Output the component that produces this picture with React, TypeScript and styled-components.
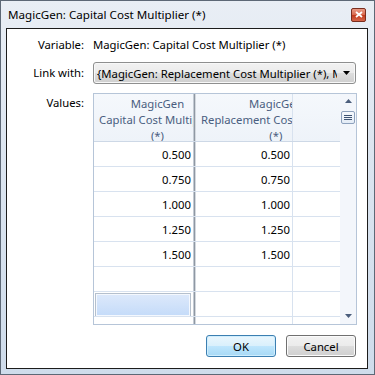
import React from 'react'
import styled, { createGlobalStyle } from 'styled-components'

const GlobalStyle = createGlobalStyle`
  html, body {
    margin: 0;
    padding: 0;
    background: #ffffff;
  }
  * {
    box-sizing: border-box;
  }
`

const FONT = `"Noto Sans", "Segoe UI", sans-serif`

const Window = styled.div`
  width: 375px;
  height: 375px;
  display: flex;
  flex-direction: column;
  padding: 0 6px 5px 5px;
  border: 1px solid #5d6876;
  background: linear-gradient(180deg, #e9eef5 0%, #dce5f0 40%, #cfdceb 100%);
  font-family: ${FONT};
  font-size: 11.3px;
  color: #000;
  overflow: hidden;
`

const TitleBar = styled.div`
  height: 27px;
  display: flex;
  align-items: center;
  padding-left: 2px;
  padding-right: 2px;
`

const Title = styled.div`
  flex: 1;
  font-size: 11.6px;
  color: #000;
`

const CloseButton = styled.div`
  width: 15px;
  height: 14px;
  flex: none;
  border: 1px solid #7a2e1f;
  border-radius: 2px;
  background-color: #d0583c;
  background-image: linear-gradient(180deg, #e99a86 0%, #d9694e 48%, #c2391b 52%, #d6664a 100%);
  display: flex;
  align-items: center;
  justify-content: center;
`

const Client = styled.div`
  flex: 1;
  min-width: 0;
  border: 1px solid #1c1c1c;
  background: #ffffff;
  padding: 6px 10px 0 0;
  display: flex;
  flex-direction: column;
`

const FieldRow = styled.div<{ $top: number }>`
  display: grid;
  grid-template-columns: 77px minmax(0, 1fr);
  column-gap: 9px;
  margin-top: ${({ $top }) => $top}px;
`

const Label = styled.div<{ $pad?: number }>`
  text-align: right;
  line-height: 20px;
  padding-top: ${({ $pad }) => $pad ?? 0}px;
`

const Value = styled.div`
  line-height: 20px;
  white-space: nowrap;
`

const Combo = styled.div`
  height: 22px;
  min-width: 0;
  margin-right: 1px;
  border: 1px solid #8e8f8f;
  border-radius: 3px;
  background: linear-gradient(180deg, #f2f2f2 0%, #ebebeb 50%, #dddddd 51%, #cfcfcf 100%);
  box-shadow: inset 0 0 0 1px #f8f8f8;
  display: flex;
  align-items: center;
  padding-left: 3px;
`

const ComboText = styled.div`
  flex: 1;
  min-width: 0;
  overflow: hidden;
  white-space: nowrap;
`

const ComboArrow = styled.div`
  width: 18px;
  flex: none;
  display: flex;
  justify-content: center;
`

const Grid = styled.div`
  height: 232px;
  min-width: 0;
  border: 1px solid #b6c5d8;
  display: flex;
  overflow: hidden;
`

const GridMain = styled.div`
  flex: 1;
  min-width: 0;
  display: flex;
  flex-direction: column;
  overflow: hidden;
`

const GridRow = styled.div<{ $header?: boolean }>`
  display: flex;
  flex: none;
  height: ${({ $header }) => ($header ? 48 : 25)}px;
  border-bottom: 1px solid ${({ $header }) => ($header ? '#cdd8e6' : '#d8e2ef')};
  background: ${({ $header }) =>
    $header ? 'linear-gradient(180deg, #f5f8fc 0%, #eef3f9 100%)' : '#ffffff'};
`

const Cell = styled.div<{ $w?: number; $line?: boolean }>`
  width: ${({ $w }) => ($w ? `${$w}px` : 'auto')};
  flex: ${({ $w }) => ($w ? 'none' : '1')};
  border-right: ${({ $line }) => ($line ? '1px solid #d8e2ef' : 'none')};
  overflow: hidden;
  display: flex;
  align-items: center;
  justify-content: flex-end;
  padding-right: 2px;
`

const HeaderCell = styled(Cell)`
  justify-content: flex-start;
  align-items: flex-start;
  padding: 2px 0 0 5px;
`

const HeaderText = styled.div`
  flex: none;
  width: max-content;
  text-align: center;
  line-height: 16px;
  color: #4a5e80;
  white-space: nowrap;
`

const Splitter = styled.div`
  width: 3px;
  flex: none;
  background: linear-gradient(90deg, #c3cad3 0 1px, #8f98a3 1px 2px, #d4d9df 2px 3px);
`

const SelectedBox = styled.div`
  width: 100%;
  height: 100%;
  margin: 1px 0 0 1px;
  border: 1px solid #b5c0cd;
  box-shadow: inset 0 0 0 1px #f4f8fe;
  background: linear-gradient(180deg, #dde9fb 0%, #c4dbf9 100%);
`

const ScrollBar = styled.div`
  width: 16px;
  flex: none;
  background: #f3f6fb;
  display: flex;
  flex-direction: column;
  align-items: center;
`

const Thumb = styled.div`
  width: 14px;
  height: 13px;
  margin-top: 8px;
  border: 1px solid #8ea2bd;
  border-radius: 2px;
  background: linear-gradient(180deg, #f6f9fd 0%, #e4ecf6 100%);
  display: flex;
  flex-direction: column;
  align-items: center;
  justify-content: center;
  gap: 1px;
`

const ThumbLine = styled.div`
  width: 8px;
  height: 1px;
  background: #3f5473;
`

const Spacer = styled.div`
  flex: 1;
`

const Buttons = styled.div`
  display: flex;
  justify-content: flex-end;
  gap: 10px;
  margin-top: 10px;
  padding-right: 1px;
`

const Button = styled.div<{ $default?: boolean }>`
  width: 70px;
  height: 22px;
  border: 1px solid ${({ $default }) => ($default ? '#3c7fb1' : '#707070')};
  border-radius: 3px;
  background: ${({ $default }) =>
    $default
      ? 'linear-gradient(180deg, #eaf6fd 0%, #d9f0fc 50%, #bee6fd 51%, #a7d9f5 100%)'
      : 'linear-gradient(180deg, #f2f2f2 0%, #ebebeb 50%, #dddddd 51%, #cfcfcf 100%)'};
  box-shadow: ${({ $default }) => ($default ? 'inset 0 0 0 1px #cfeefe' : 'inset 0 0 0 1px #fbfbfb')};
  display: flex;
  align-items: center;
  justify-content: center;
`

function Triangle({ up }: { up?: boolean }) {
  return (
    <svg width="7" height="4" viewBox="0 0 7 4">
      <path d={up ? 'M0 4 L3.5 0 L7 4 Z' : 'M0 0 L7 0 L3.5 4 Z'} fill="#4b5e7c" />
    </svg>
  )
}

const values = ['0.500', '0.750', '1.000', '1.250', '1.500']

export default function App() {
  const rows = [...values, '', 'sel', '']
  return (
    <>
      <GlobalStyle />
      <Window>
        <TitleBar>
          <Title>MagicGen: Capital Cost Multiplier (*)</Title>
          <CloseButton>
            <svg width="8" height="7" viewBox="0 0 8 7">
              <path d="M1 1 L7 6 M7 1 L1 6" stroke="#ffffff" strokeWidth="1.8" />
            </svg>
          </CloseButton>
        </TitleBar>
        <Client>
          <FieldRow $top={0}>
            <Label>Variable:</Label>
            <Value>MagicGen: Capital Cost Multiplier (*)</Value>
          </FieldRow>
          <FieldRow $top={7}>
            <Label $pad={1}>Link with:</Label>
            <Combo>
              <ComboText>{'{MagicGen: Replacement Cost Multiplier (*), MagicGen: Capital Cost Multiplier (*)}'}</ComboText>
              <ComboArrow>
                <svg width="7" height="4" viewBox="0 0 7 4">
                  <path d="M0 0 L7 0 L3.5 4 Z" fill="#000" />
                </svg>
              </ComboArrow>
            </Combo>
          </FieldRow>
          <FieldRow $top={9}>
            <Label $pad={0}>Values:</Label>
            <Grid>
              <GridMain>
                <GridRow $header>
                  <HeaderCell $w={99}>
                    <HeaderText>
                      MagicGen
                      <br />
                      Capital Cost Multiplier
                      <br />
                      (*)
                    </HeaderText>
                  </HeaderCell>
                  <Splitter />
                  <HeaderCell $w={97} $line>
                    <HeaderText>
                      MagicGen
                      <br />
                      Replacement Cost Multiplier
                      <br />
                      (*)
                    </HeaderText>
                  </HeaderCell>
                  <Cell />
                </GridRow>
                {rows.map((v, i) => (
                  <GridRow key={i}>
                    <Cell $w={99}>{v === 'sel' ? <SelectedBox /> : v}</Cell>
                    <Splitter />
                    <Cell $w={97} $line>
                      {v === 'sel' ? '' : v}
                    </Cell>
                    <Cell />
                  </GridRow>
                ))}
              </GridMain>
              <ScrollBar>
                <div style={{ marginTop: 5, lineHeight: 0 }}>
                  <Triangle up />
                </div>
                <Thumb>
                  <ThumbLine />
                  <ThumbLine />
                  <ThumbLine />
                </Thumb>
                <Spacer />
                <div style={{ marginBottom: 6, lineHeight: 0 }}>
                  <Triangle />
                </div>
              </ScrollBar>
            </Grid>
          </FieldRow>
          <Buttons>
            <Button $default>OK</Button>
            <Button>Cancel</Button>
          </Buttons>
        </Client>
      </Window>
    </>
  )
}
